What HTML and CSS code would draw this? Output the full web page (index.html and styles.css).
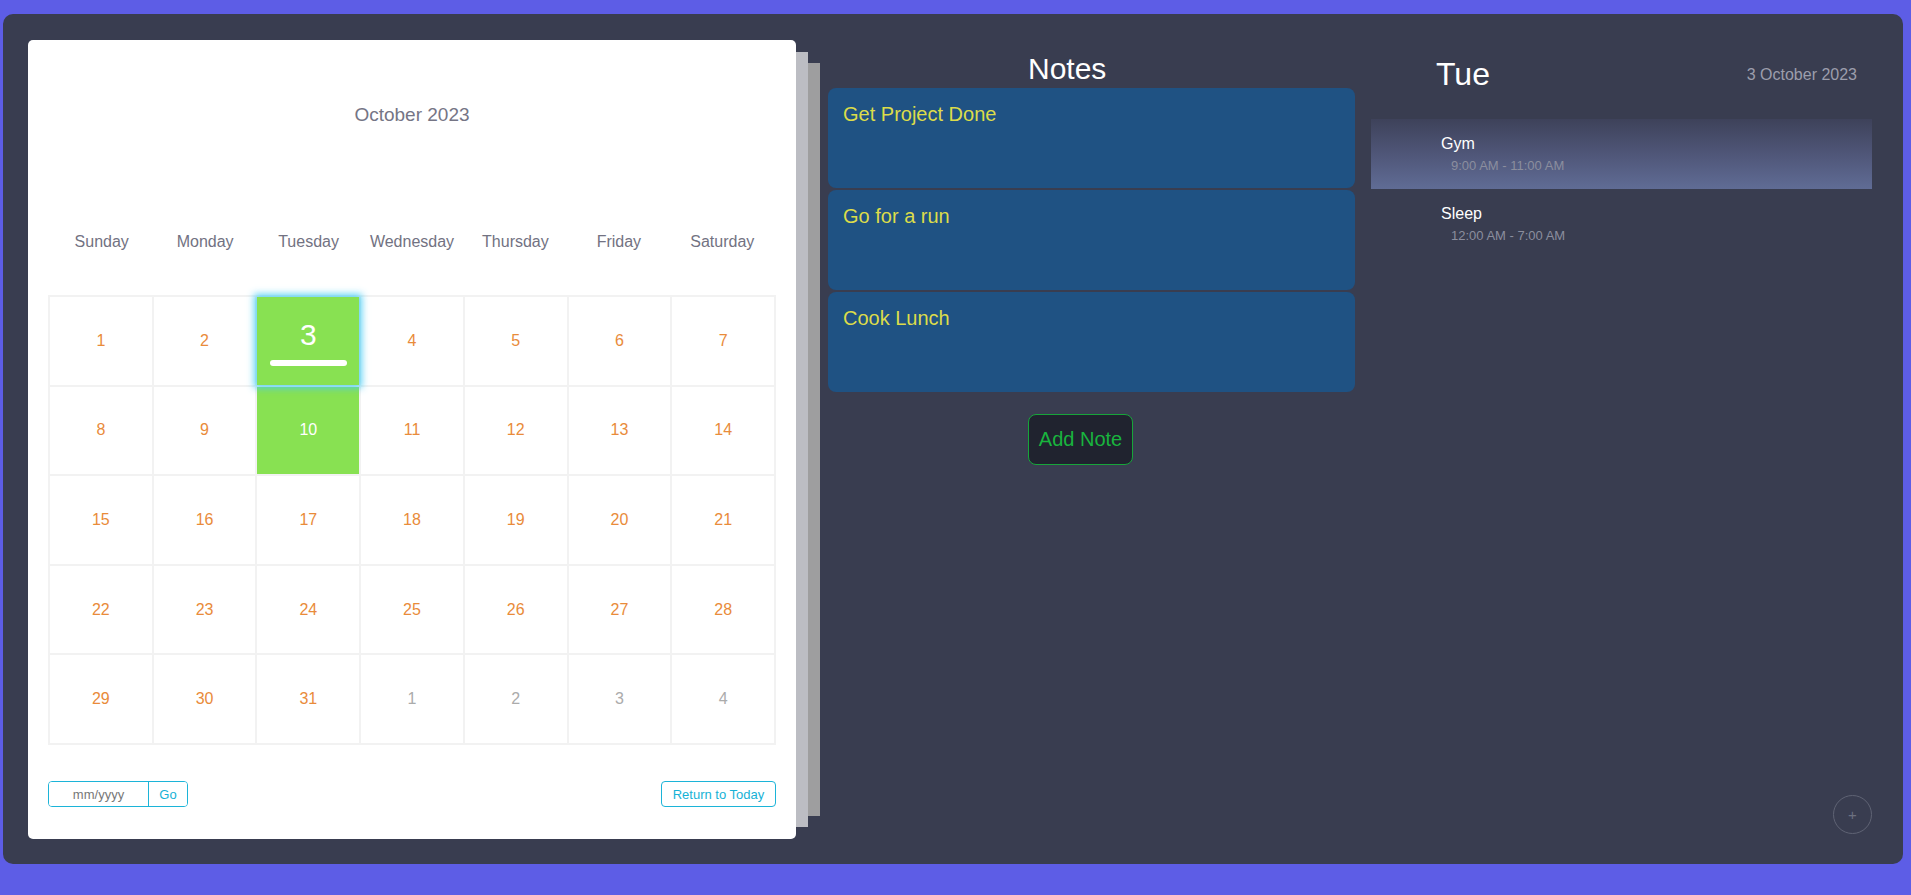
FILE: index.html
```html
<!DOCTYPE html>
<html lang="en">
<head>
<meta charset="utf-8">
<title>Calendar</title>
<link rel="stylesheet" href="styles.css">
</head>
<body>
<div class="app">
  <section class="calendar">
    <div class="month">October 2023</div>
    <div class="weekdays">
      <span>Sunday</span><span>Monday</span><span>Tuesday</span><span>Wednesday</span><span>Thursday</span><span>Friday</span><span>Saturday</span>
    </div>
    <div class="days">
      <div class="day">1</div>
      <div class="day">2</div>
      <div class="day today"><span class="today-num">3</span><span class="today-bar"></span></div>
      <div class="day">4</div>
      <div class="day">5</div>
      <div class="day">6</div>
      <div class="day">7</div>
      <div class="day">8</div>
      <div class="day">9</div>
      <div class="day selected">10</div>
      <div class="day">11</div>
      <div class="day">12</div>
      <div class="day">13</div>
      <div class="day">14</div>
      <div class="day">15</div>
      <div class="day">16</div>
      <div class="day">17</div>
      <div class="day">18</div>
      <div class="day">19</div>
      <div class="day">20</div>
      <div class="day">21</div>
      <div class="day">22</div>
      <div class="day">23</div>
      <div class="day">24</div>
      <div class="day">25</div>
      <div class="day">26</div>
      <div class="day">27</div>
      <div class="day">28</div>
      <div class="day">29</div>
      <div class="day">30</div>
      <div class="day">31</div>
      <div class="day other">1</div>
      <div class="day other">2</div>
      <div class="day other">3</div>
      <div class="day other">4</div>
    </div>
    <div class="controls">
      <div class="jump">
        <input class="jump-input" type="text" placeholder="mm/yyyy">
        <button class="jump-go">Go</button>
      </div>
      <button class="today-btn">Return to Today</button>
    </div>
  </section>

  <section class="notes">
    <h2 class="notes-title">Notes</h2>
    <div class="note">Get Project Done</div>
    <div class="note">Go for a run</div>
    <div class="note">Cook Lunch</div>
    <button class="add-note">Add Note</button>
  </section>

  <section class="agenda">
    <header class="agenda-head">
      <span class="agenda-day">Tue</span>
      <span class="agenda-date">3 October 2023</span>
    </header>
    <div class="events">
      <div class="event event-active">
        <div class="event-title">Gym</div>
        <div class="event-time">9:00 AM - 11:00 AM</div>
      </div>
      <div class="event">
        <div class="event-title">Sleep</div>
        <div class="event-time">12:00 AM - 7:00 AM</div>
      </div>
    </div>
    <button class="fab">+</button>
  </section>
</div>
</body>
</html>
```

FILE: styles.css
```css
* {
  box-sizing: border-box;
}

html, body {
  height: 100%;
}

body {
  margin: 0;
  padding: 14px 8px 31px 3px;
  background: #5d5de6;
  font-family: "Liberation Sans", Arial, sans-serif;
  overflow: hidden;
}

.app {
  display: flex;
  height: 850px;
  padding: 26px 31px 25px 25px;
  background: #393d50;
  border-radius: 10px;
}

/* Calendar card */
.calendar {
  flex: none;
  width: 768px;
  height: 799px;
  padding: 0 20px;
  background: #ffffff;
  border-radius: 5px;
  box-shadow: 24px 0 0 -12px #bcbdc3, 47px 0 0 -23px #9e9e9f;
  position: relative;
}

.month {
  margin-top: 64px;
  text-align: center;
  font-size: 19px;
  line-height: 22px;
  color: #757585;
}

.weekdays {
  display: grid;
  grid-template-columns: repeat(7, 1fr);
  margin-top: 107px;
  padding: 0 2px;
  font-size: 16px;
  line-height: 18px;
  color: #727282;
  text-align: center;
}

.days {
  display: grid;
  grid-template-columns: repeat(7, 1fr);
  grid-template-rows: repeat(5, 1fr);
  gap: 2px;
  padding: 2px;
  height: 450px;
  margin-top: 44px;
  background: #f2f2f2;
}

.day {
  display: flex;
  align-items: center;
  justify-content: center;
  background: #ffffff;
  font-size: 16px;
  color: #e98b3a;
}

.day.other {
  color: #ababab;
}

.day.selected {
  background: #88e152;
  color: #ffffff;
}

.day.today {
  position: relative;
  z-index: 1;
  flex-direction: column;
  justify-content: flex-start;
  padding-top: 21px;
  background: #88e152;
  color: #ffffff;
  box-shadow: 0 0 7px 3px rgba(70, 205, 245, 0.85);
}

.today-num {
  font-size: 30px;
  line-height: 34px;
}

.today-bar {
  display: block;
  width: 77px;
  height: 6px;
  margin-top: 8px;
  background: #ffffff;
  border-radius: 3px;
}

.controls {
  display: flex;
  justify-content: space-between;
  margin-top: 36px;
}

.jump {
  display: flex;
  height: 26px;
  border: 1px solid #1cb4d8;
  border-radius: 4px;
  overflow: hidden;
}

.jump-input {
  width: 100px;
  border: none;
  border-right: 1px solid #1cb4d8;
  padding: 0;
  font-family: inherit;
  font-size: 13px;
  text-align: center;
  outline: none;
}

.jump-input::placeholder {
  color: #777777;
}

.jump-go {
  width: 38px;
  border: none;
  background: #ffffff;
  font-family: inherit;
  font-size: 13px;
  color: #16b2d6;
  padding: 0;
}

.today-btn {
  height: 26px;
  width: 115px;
  padding: 0;
  border: 1px solid #1cb4d8;
  border-radius: 4px;
  background: #ffffff;
  font-family: inherit;
  font-size: 13px;
  color: #16b2d6;
}

/* Notes */
.notes {
  flex: none;
  width: 527px;
  margin-left: 32px;
  padding-top: 11px;
  display: flex;
  flex-direction: column;
  align-items: flex-start;
}

.notes-title {
  margin: 0 0 2px 200px;
  font-size: 30px;
  line-height: 35px;
  font-weight: normal;
  color: #ffffff;
}

.note {
  width: 100%;
  height: 100px;
  margin-bottom: 2px;
  padding: 15px 15px;
  background: #1f5283;
  border-radius: 8px;
  font-size: 20px;
  line-height: 23px;
  color: #dcdc4a;
}

.add-note {
  margin: 20px 0 0 200px;
  width: 105px;
  height: 51px;
  padding: 0;
  background: #20232f;
  border: 1px solid #17a53a;
  border-radius: 8px;
  font-family: inherit;
  font-size: 20px;
  color: #19b43e;
}

/* Agenda */
.agenda {
  flex: 1;
  margin-left: 16px;
  position: relative;
}

.agenda-head {
  display: flex;
  align-items: center;
  justify-content: space-between;
  padding: 16px 15px 0 65px;
}

.agenda-day {
  font-size: 32px;
  line-height: 37px;
  color: #ffffff;
}

.agenda-date {
  font-size: 16px;
  line-height: 18px;
  color: #9c9eac;
}

.events {
  margin-top: 26px;
}

.event {
  height: 70px;
  padding: 16px 0 0 70px;
}

.event-active {
  background: linear-gradient(to bottom, #3e425a 0%, #4f5678 50%, #606c95 100%);
}

.event-title {
  font-size: 16px;
  line-height: 18px;
  color: #ffffff;
}

.event-time {
  margin-top: 5px;
  padding-left: 10px;
  font-size: 13px;
  line-height: 15px;
  color: #8b8e9e;
}

.fab {
  position: absolute;
  right: 0;
  bottom: 5px;
  width: 39px;
  height: 39px;
  padding: 0;
  border: 1.5px solid #5f6374;
  border-radius: 50%;
  background: transparent;
  font-family: inherit;
  font-size: 15px;
  line-height: 1;
  color: #6c7080;
}
```
